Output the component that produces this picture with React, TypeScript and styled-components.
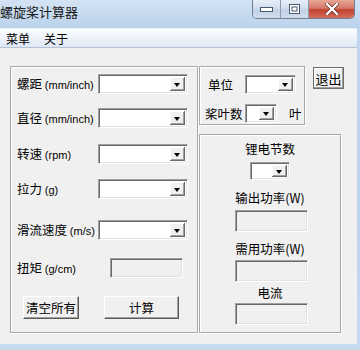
import styled, { createGlobalStyle } from "styled-components";

const GlobalStyle = createGlobalStyle`
html, body {
  margin:0;
  padding:0;
  background:#c4d8ee;
  overflow:hidden;
}
body {
  font-family: "Liberation Sans", "Noto Sans CJK SC", sans-serif;
  font-size:12px;
  color:#000;
}
`;

// 🔹 window frame
const Window = styled.div`
display:flex;
flex-direction:column;
width:360px;
height:350px;
padding-bottom:6px;
box-sizing:border-box;
background:linear-gradient(180deg, #c2d7ee 0%, #bcd3ec 60%, #c6dbf0 100%);
`;

const TitleBar = styled.div`
display:flex;
justify-content:space-between;
align-items:flex-start;
height:28px;
flex-shrink:0;
background:linear-gradient(180deg, #d3e3f4 0%, #bad2eb 100%);
`;

const Title = styled.span`
margin:3px 0 0 0;
font-family:"Noto Sans CJK SC", sans-serif;
font-size:13px;
line-height:18px;
color:#1a1a1a;
`;

const CaptionGroup = styled.div`
display:flex;
margin-right:5px;
height:18px;
border:1px solid #6f7f96;
border-top:none;
border-radius:0 0 5px 5px;
overflow:hidden;
`;

const CaptionButton = styled.div<{ $close?: boolean; $first?: boolean; $w: number }>`
display:flex;
align-items:center;
justify-content:center;
width:${p => p.$w}px;
height:100%;
border-left:${p => (p.$first ? "none" : "1px solid #8a9bb2")};
background:${p =>
  p.$close
    ? "linear-gradient(180deg, #e8a596 0%, #d5786a 45%, #c2402f 55%, #d2705c 100%)"
    : "linear-gradient(180deg, #e6eef8 0%, #d3dfed 45%, #c2d2e5 55%, #cfdcec 100%)"};
`;

const MenuBar = styled.div`
display:flex;
gap:14px;
height:18px;
margin-right:3px;
padding-left:6px;
flex-shrink:0;
align-items:center;
background:linear-gradient(180deg, #fbfcfe 0%, #eef3fa 50%, #dde7f4 100%);
border-top:1px solid #e8eef7;
border-bottom:1px solid #b6c1d1;
font-family:"Noto Sans CJK SC", sans-serif;
font-size:12px;
`;

const Client = styled.div`
display:flex;
flex:1;
margin-right:3px;
padding:18px 0 0 10px;
background:#f0f0f0;
`;

// 🔹 group box (etched)
const Group = styled.div<{ $w: number; $h: number }>`
display:flex;
flex-direction:column;
width:${p => p.$w}px;
height:${p => p.$h}px;
box-sizing:border-box;
border:1px solid #a8a8a8;
box-shadow:inset 1px 1px 0 #fff, 1px 1px 0 #fff;
`;

const LeftGroup = styled(Group)`
padding:7px 0 0 6px;
`;

const Row = styled.div<{ $mt?: number }>`
display:flex;
align-items:center;
height:20px;
margin-top:${p => p.$mt ?? 0}px;
`;

const Label = styled.span<{ $w?: number; $pl?: number }>`
box-sizing:border-box;
width:${p => (p.$w ? `${p.$w}px` : "auto")};
padding-left:${p => p.$pl ?? 0}px;
flex-shrink:0;
white-space:nowrap;
font-family:"Noto Sans CJK SC", sans-serif;
font-size:12.5px;
line-height:16px;
`;

const Unit = styled.span`
font-family:"Liberation Sans", sans-serif;
font-size:11px;
`;

const Combo = styled.div<{ $w: number; $h?: number }>`
display:flex;
justify-content:flex-end;
width:${p => p.$w}px;
height:${p => p.$h ?? 20}px;
box-sizing:border-box;
padding:2px;
background:#fff;
border:1px solid;
border-color:#a0a0a0 #fff #fff #a0a0a0;
box-shadow:inset 1px 1px 0 #696969, inset -1px -1px 0 #e3e3e3;
`;

const DropButton = styled.div`
display:flex;
align-items:center;
justify-content:center;
width:15px;
height:100%;
box-sizing:border-box;
background:#f0f0f0;
box-shadow:inset -1px -1px 0 #696969, inset 1px 1px 0 #fff, inset -2px -2px 0 #a0a0a0;
&::after {
  content:'';
  margin:1px 1px 0 0;
  border-left:3.5px solid transparent;
  border-right:3.5px solid transparent;
  border-top:4px solid #000;
}
`;

const TextBox = styled.div<{ $w: number; $h?: number }>`
width:${p => p.$w}px;
height:${p => p.$h ?? 20}px;
box-sizing:border-box;
background:#f0f0f0;
border:1px solid;
border-color:#a0a0a0 #fff #fff #a0a0a0;
box-shadow:inset 1px 1px 0 #696969, inset -1px -1px 0 #e3e3e3;
`;

const Button = styled.div<{ $w: number; $h: number }>`
display:flex;
align-items:center;
justify-content:center;
width:${p => p.$w}px;
height:${p => p.$h}px;
box-sizing:border-box;
background:#f0f0f0;
border:1px solid;
border-color:#fff #5a5a5a #5a5a5a #fff;
box-shadow:inset -1px -1px 0 #a0a0a0;
font-family:"Noto Sans CJK SC", sans-serif;
font-size:12.5px;
`;

const ButtonRow = styled.div`
display:flex;
gap:25px;
margin:18px 0 0 6px;
`;

const RightColumn = styled.div`
display:flex;
flex-direction:column;
gap:9px;
margin-left:1px;
`;

const TopRight = styled.div`
display:flex;
align-items:flex-start;
gap:8px;
`;

const UnitGroup = styled(Group)`
padding:8px 0 0 5px;
gap:10px;
`;

const UnitRow = styled.div`
display:flex;
align-items:center;
`;

const ExitButton = styled(Button)`
margin-top:1px;
border:1px solid #6b6b6b;
box-shadow:inset -1px -1px 0 #a0a0a0, inset 1px 1px 0 #fff;
font-size:13px;
`;

const BatteryGroup = styled(Group)`
align-items:center;
padding-top:6px;
`;

const Caption = styled.span<{ $mt: number }>`
margin-top:${p => p.$mt}px;
font-family:"Noto Sans CJK SC", sans-serif;
font-size:12.5px;
line-height:16px;
`;

const Field = styled.div<{ $mt: number; $ml?: number }>`
margin-top:${p => p.$mt}px;
margin-left:${p => p.$ml ?? 0}px;
`;

const ComboBox = ({ w, h }: { w: number; h?: number }) => (
  <Combo $w={w} $h={h}>
    <DropButton />
  </Combo>
);

const inputs = [
  { name: "螺距", unit: "(mm/inch)", mt: 0 },
  { name: "直径", unit: "(mm/inch)", mt: 14 },
  { name: "转速", unit: "(rpm)", mt: 16 },
  { name: "拉力", unit: "(g)", mt: 15 },
  { name: "滑流速度", unit: "(m/s)", mt: 21 },
];

export default function App() {
  return (
    <>
      <GlobalStyle />
      <Window>
        <TitleBar>
          <Title>螺旋桨计算器</Title>
          <CaptionGroup>
            <CaptionButton $w={27} $first>
              <svg width="13" height="6" viewBox="0 0 13 6">
                <rect x="0.5" y="1.5" width="12" height="4" fill="#fff" stroke="#4a5a70" />
              </svg>
            </CaptionButton>
            <CaptionButton $w={27}>
              <svg width="11" height="10" viewBox="0 0 11 10">
                <rect x="0.5" y="0.5" width="10" height="9" fill="#fff" stroke="#4a5a70" />
                <rect x="3" y="3" width="5" height="4" fill="none" stroke="#4a5a70" />
              </svg>
            </CaptionButton>
            <CaptionButton $w={45} $close>
              <svg width="14" height="12" viewBox="0 0 14 12">
                <path d="M2 1 L12 11 M12 1 L2 11" stroke="#5a1a14" strokeWidth="3.6" strokeLinecap="square" />
                <path d="M2 1 L12 11 M12 1 L2 11" stroke="#fff" strokeWidth="2.4" strokeLinecap="square" />
              </svg>
            </CaptionButton>
          </CaptionGroup>
        </TitleBar>

        <MenuBar>
          <span>菜单</span>
          <span>关于</span>
        </MenuBar>

        <Client>
          <LeftGroup $w={188} $h={267}>
            {inputs.map(item => (
              <Row key={item.name} $mt={item.mt}>
                <Label $w={81}>
                  {item.name} <Unit>{item.unit}</Unit>
                </Label>
                <ComboBox w={90} />
              </Row>
            ))}
            <Row $mt={18}>
              <Label $w={93}>
                扭矩 <Unit>(g/cm)</Unit>
              </Label>
              <TextBox $w={73} />
            </Row>
            <ButtonRow>
              <Button $w={56} $h={23}>清空所有</Button>
              <Button $w={75} $h={23}>计算</Button>
            </ButtonRow>
          </LeftGroup>

          <RightColumn>
            <TopRight>
              <UnitGroup $w={106} $h={59}>
                <UnitRow>
                  <Label $w={40} $pl={3}>单位</Label>
                  <ComboBox w={51} h={19} />
                </UnitRow>
                <UnitRow>
                  <Label $w={40}>桨叶数</Label>
                  <ComboBox w={32} h={19} />
                  <Label $pl={12}>叶</Label>
                </UnitRow>
              </UnitGroup>
              <ExitButton $w={31} $h={22}>退出</ExitButton>
            </TopRight>

            <BatteryGroup $w={142} $h={199}>
              <Caption $mt={0}>锂电节数</Caption>
              <Field $mt={5}>
                <ComboBox w={40} h={18} />
              </Field>
              <Caption $mt={10}>输出功率(W)</Caption>
              <Field $mt={4} $ml={3}>
                <TextBox $w={73} $h={22} />
              </Field>
              <Caption $mt={9}>需用功率(W)</Caption>
              <Field $mt={3} $ml={3}>
                <TextBox $w={73} $h={22} />
              </Field>
              <Caption $mt={3}>电流</Caption>
              <Field $mt={2} $ml={3}>
                <TextBox $w={73} $h={22} />
              </Field>
            </BatteryGroup>
          </RightColumn>
        </Client>
      </Window>
    </>
  );
}
